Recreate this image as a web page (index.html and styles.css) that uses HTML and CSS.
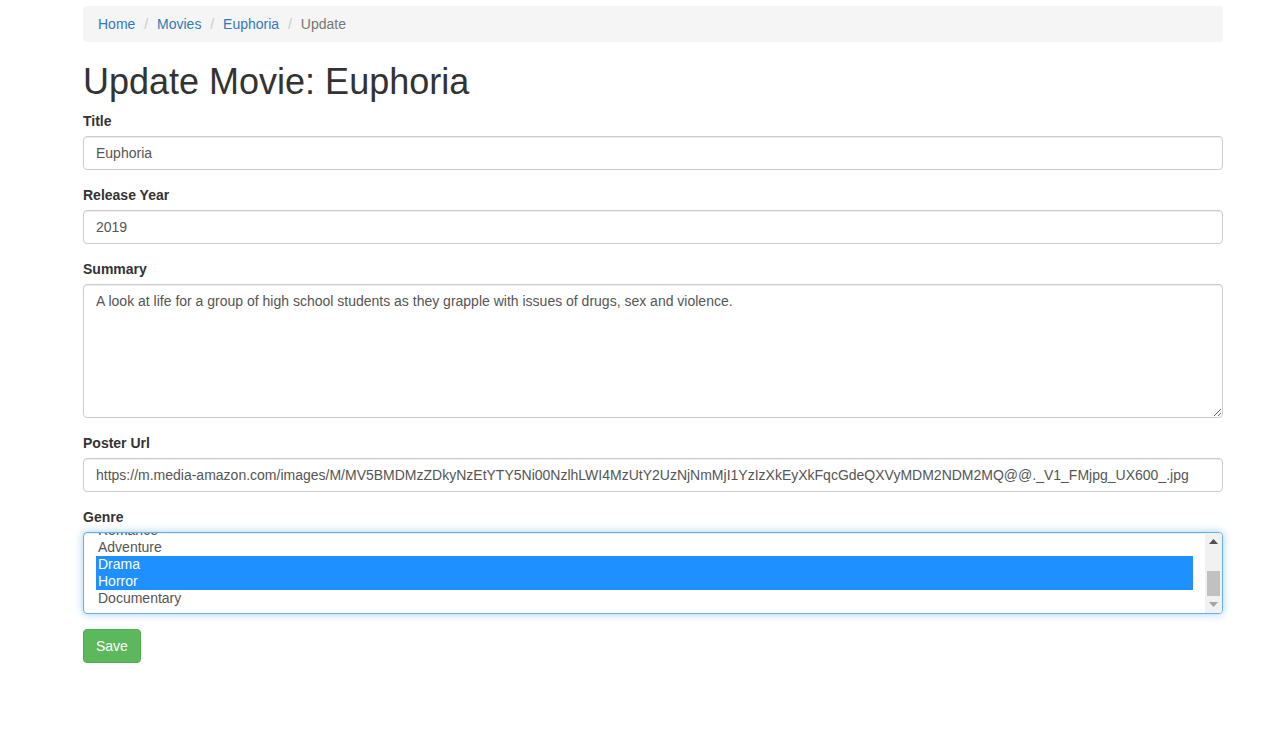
FILE: index.html
```html
<!DOCTYPE html>
<html lang="en">
<head>
<meta charset="utf-8">
<title>Update Movie: Euphoria</title>
<link rel="stylesheet" href="styles.css">
</head>
<body>
<div class="container">
  <ol class="breadcrumb">
    <li><a href="#">Home</a></li>
    <li><a href="#">Movies</a></li>
    <li><a href="#">Euphoria</a></li>
    <li class="active">Update</li>
  </ol>
  <h1 class="page-title">Update Movie: Euphoria</h1>
  <form class="movie-form">
    <div class="form-group">
      <label for="title">Title</label>
      <input id="title" class="form-control" type="text" value="Euphoria">
    </div>
    <div class="form-group">
      <label for="year">Release Year</label>
      <input id="year" class="form-control" type="text" value="2019">
    </div>
    <div class="form-group">
      <label for="summary">Summary</label>
      <textarea id="summary" class="form-control textarea" rows="6">A look at life for a group of high school students as they grapple with issues of drugs, sex and violence.</textarea>
    </div>
    <div class="form-group">
      <label for="poster">Poster Url</label>
      <input id="poster" class="form-control" type="text" value="https://m.media-amazon.com/images/M/MV5BMDMzZDkyNzEtYTY5Ni00NzlhLWI4MzUtY2UzNjNmMjI1YzIzXkEyXkFqcGdeQXVyMDM2NDM2MQ@@._V1_FMjpg_UX600_.jpg">
    </div>
    <div class="form-group">
      <label for="genre">Genre</label>
      <div class="select-wrap">
        <select id="genre" class="form-control select-multi focused" multiple>
          <option>Action</option>
          <option>Comedy</option>
          <option>Sci-Fi</option>
          <option>Thriller</option>
          <option>Romance</option>
          <option>Adventure</option>
          <option selected>Drama</option>
          <option selected>Horror</option>
          <option>Documentary</option>
        </select>
        <div class="fake-scrollbar" aria-hidden="true">
          <div class="sb-btn">
            <svg width="9" height="5" viewBox="0 0 9 5"><polygon points="0,5 9,5 4.5,0" fill="#505050"/></svg>
          </div>
          <div class="sb-track"><div class="sb-thumb"></div></div>
          <div class="sb-btn">
            <svg width="9" height="5" viewBox="0 0 9 5"><polygon points="0,0 9,0 4.5,5" fill="#a3a3a3"/></svg>
          </div>
        </div>
      </div>
    </div>
    <button type="button" class="btn btn-success">Save</button>
  </form>
</div>
<script src="script.js"></script>
</body>
</html>
```

FILE: styles.css
```css
* { box-sizing: border-box; }
html, body { margin: 0; padding: 0; background: #fff; }
body {
  font-family: "Liberation Sans", Arial, Helvetica, sans-serif;
  font-size: 14px;
  line-height: 1.42857143;
  color: #333;
}
.container {
  width: 1140px;
  margin-left: 83px;
}
.breadcrumb {
  list-style: none;
  margin: 6px 0 20px;
  padding: 8px 15px;
  background: #f5f5f5;
  border-radius: 4px;
}
.breadcrumb li { display: inline-block; }
.breadcrumb li + li::before {
  content: "/\00a0";
  padding: 0 5px;
  color: #ccc;
}
.breadcrumb a { color: #337ab7; text-decoration: none; }
.breadcrumb .active { color: #777; }
.page-title {
  font-family: "Liberation Sans", Arial, Helvetica, sans-serif;
  font-size: 36px;
  font-weight: 500;
  line-height: 39px;
  margin: 20px 0 10px;
  color: #333;
}
.form-group { margin-bottom: 15px; }
label {
  display: inline-block;
  max-width: 100%;
  margin-bottom: 5px;
  font-weight: bold;
}
.form-control {
  display: block;
  width: 100%;
  height: 34px;
  padding: 6px 12px;
  font-family: inherit;
  font-size: 14px;
  line-height: 1.42857143;
  color: #555;
  background: #fff;
  border: 1px solid #ccc;
  border-radius: 4px;
  box-shadow: inset 0 1px 1px rgba(0,0,0,.075);
  outline: none;
  margin: 0;
}
.textarea {
  height: 134px;
  resize: vertical;
}
.select-wrap { position: relative; }
.select-multi {
  height: 82px;
  padding: 6px 29px 6px 12px;
  overflow-y: scroll;
  scrollbar-width: none;
}
.select-multi.focused {
  border-color: #66afe9;
  box-shadow: inset 0 1px 1px rgba(0,0,0,.075), 0 0 8px rgba(102,175,233,.6);
}
.select-multi option {
  padding: 0 2px 1px;
  line-height: 16px;
  height: 17px;
  color: #555;
  font-family: inherit;
  font-size: 14px;
}
.select-multi option:checked {
  background: #1e90ff linear-gradient(0deg, #1e90ff 0%, #1e90ff 100%);
  color: #fff;
}
.fake-scrollbar {
  position: absolute;
  top: 1px;
  right: 1px;
  bottom: 1px;
  width: 17px;
  background: #f1f1f1;
  display: flex;
  flex-direction: column;
  pointer-events: none;
  border-radius: 0 3px 3px 0;
}
.sb-btn {
  height: 17px;
  flex: 0 0 17px;
  display: flex;
  align-items: center;
  justify-content: center;
}
.sb-btn svg { display: block; }
.sb-track {
  flex: 1;
  display: flex;
  flex-direction: column;
  justify-content: flex-end;
}
.sb-thumb {
  height: 25px;
  margin: 0 2px;
  background: #c1c1c1;
}
.btn {
  display: inline-block;
  padding: 6px 12px;
  font-family: inherit;
  font-size: 14px;
  line-height: 1.42857143;
  border: 1px solid transparent;
  border-radius: 4px;
  cursor: pointer;
  margin: 0;
}
.btn-success {
  color: #fff;
  background: #5cb85c;
  border-color: #4cae4c;
}
```

FILE: script.js
```js
var s = document.getElementById('genre');
s.scrollTop = s.scrollHeight;
```
